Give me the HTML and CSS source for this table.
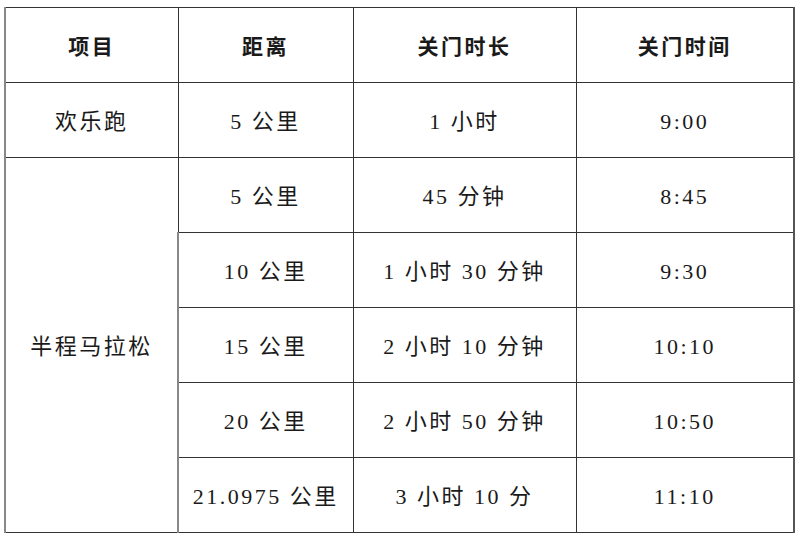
FILE: index.html
```html
<!DOCTYPE html>
<html>
<head>
<meta charset="utf-8">
<link rel="stylesheet" href="styles.css">
</head>
<body>
<table class="grid">
  <colgroup>
    <col class="c1"><col class="c2"><col class="c3"><col class="c4">
  </colgroup>
  <thead>
    <tr><th>项目</th><th>距离</th><th>关门时长</th><th>关门时间</th></tr>
  </thead>
  <tbody>
    <tr><td>欢乐跑</td><td>5 公里</td><td>1 小时</td><td>9:00</td></tr>
    <tr><td rowspan="6">半程马拉松</td><td>5 公里</td><td>45 分钟</td><td>8:45</td></tr>
    <tr><td>10 公里</td><td>1 小时 30 分钟</td><td>9:30</td></tr>
    <tr><td>15 公里</td><td>2 小时 10 分钟</td><td>10:10</td></tr>
    <tr><td>20 公里</td><td>2 小时 50 分钟</td><td>10:50</td></tr>
    <tr><td>21.0975 公里</td><td>3 小时 10 分</td><td>11:10</td></tr>
  </tbody>
</table>
</body>
</html>
```
FILE: styles.css
```css
html, body {
  margin: 0;
  padding: 0;
  background: #ffffff;
}
body {
  padding: 7px 0 0 4px;
  font-family: "Liberation Serif", "Noto Sans CJK SC", serif;
  color: #1a1a1a;
}
.grid {
  border-collapse: collapse;
  table-layout: fixed;
  width: 789px;
}
.c1 { width: 173px; }
.c2 { width: 175px; }
.c3 { width: 223px; }
.c4 { width: 218px; }
.grid th,
.grid td {
  box-sizing: border-box;
  border: 1px solid #333333;
  height: 75px;
  padding: 3px 0 0 0;
  text-align: center;
  vertical-align: middle;
  font-size: 21px;
  letter-spacing: 2.5px;
  line-height: 24px;
}
.grid th {
  font-weight: bold;
}
.grid td {
  font-weight: normal;
  font-size: 22px;
}
.grid tr > :first-child {
  border-left: 2px solid #888888;
}
.grid tr > :last-child {
  border-right: 2px solid #555555;
}
```
